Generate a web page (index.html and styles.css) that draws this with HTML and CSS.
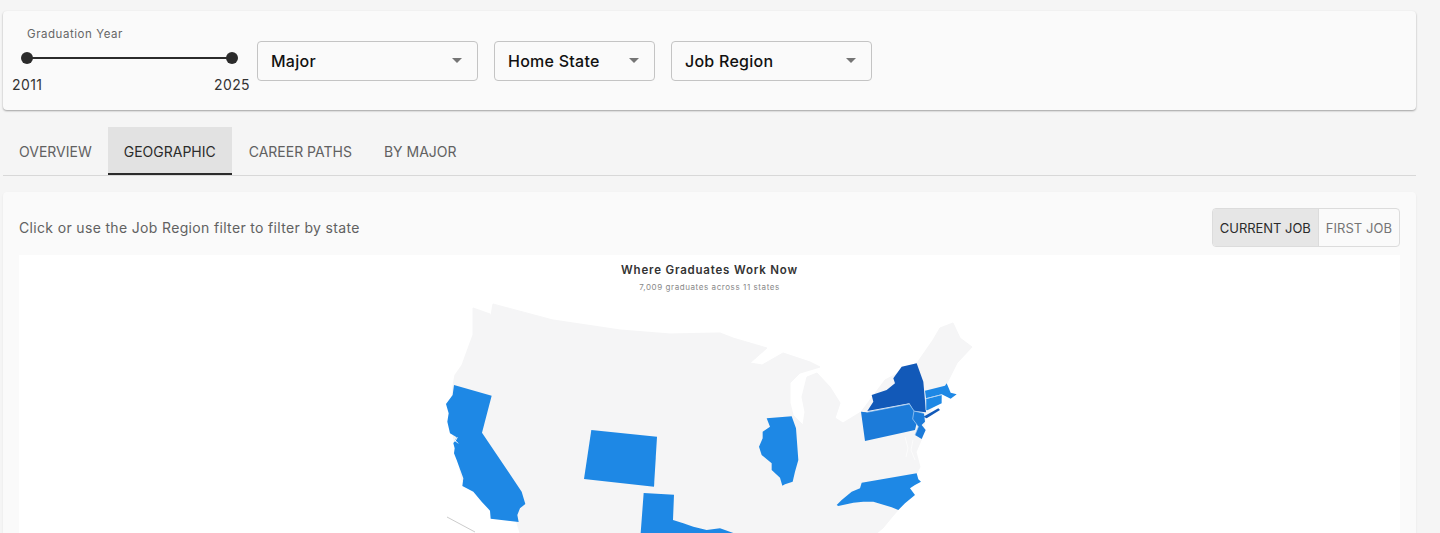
FILE: index.html
```html
<!DOCTYPE html>
<html lang="en">

<head>
    <meta charset="UTF-8">
    <meta name="viewport" content="width=device-width, initial-scale=1.0">
    <title>Graduate outcomes</title>
    <link rel="stylesheet" href="styles.css">
</head>

<body>
    <div class="page">
        <div class="filters">
            <div class="year-filter">
                <div class="year-label">Graduation Year</div>
                <div class="slider">
                    <span class="thumb"></span>
                    <span class="thumb"></span>
                </div>
                <div class="year-marks">
                    <span>2011</span>
                    <span>2025</span>
                </div>
            </div>
            <div class="select select-major"><span>Major</span><i class="arrow"></i></div>
            <div class="select select-home"><span>Home State</span><i class="arrow"></i></div>
            <div class="select select-region"><span>Job Region</span><i class="arrow"></i></div>
        </div>

        <div class="tabs">
            <div class="tab">Overview</div>
            <div class="tab active">Geographic</div>
            <div class="tab">Career Paths</div>
            <div class="tab">By Major</div>
        </div>

        <div class="card">
            <div class="card-head">
                <p class="hint">Click or use the Job Region filter to filter by state</p>
                <div class="toggle">
                    <div class="toggle-btn on">Current Job</div>
                    <div class="toggle-btn">First Job</div>
                </div>
            </div>
            <div class="chart">
                <h3 class="chart-title">Where Graduates Work Now</h3>
                <p class="chart-sub">7,009 graduates across 11 states</p>
                <svg class="map" viewBox="19 295 1381 238" width="1381" height="238">
                    <!-- land, page coords -->
                    <path class="land" d="M473 308 L490 314 L492 325 L489 327 L493 304 L553 320 L620 330 L670 334 L720 333 L733 338 L767 348 L750 363 L762 365 L783 353 L810 362 L820 367 L800 373 L790 383 L790 403 L793 415 L803 425 L805 412 L802 397 L807 377 L817 373 L830 387 L840 403 L835 418 L843 423 L861 412 L885 380 L917 363 L933 340 L940 328 L953 323 L960 338 L972 347 L957 363 L947 383 L925 420 L922 438 L916 452 L920 467 L898 510 L892 517 L883 528 L877 533 L520 533 L516 520 L480 495 L462 480 L450 420 L453 386 L455 375 L462 365 L470 343 L473 335 Z" />
                    <path class="bay" d="M905 437 L908 448 L906 457 M913 440 L911 450 L915 460" />
                    <path class="inset" d="M447 517 L475 532" />
                    <g transform="translate(440 380) scale(.33333)">
                        <path class="st" d="M42 15 L155 47 L126 158 L245 335 L256 372 L240 385 L232 405 L236 426 L152 416 L150 392 L125 365 L100 335 L67 318 L70 295 L50 240 L42 220 L44 205 L40 190 L50 172 L30 160 L22 125 L26 100 L18 72 L38 45 Z" />
                        <path class="inlet" d="M52 172 L44 186 M42 178 L54 190" />
                    </g>
                    <g transform="translate(420 295) scale(.33333)">
                        <path class="st" d="M514 405 L711 425 L702 575 L492 552 Z" />
                        <path class="st" d="M671 594 L762 599 L759 675 L790 685 L820 695 L860 705 L900 700 L900 714 L662 714 Z" />
                    </g>
                    <g transform="translate(820 420) scale(.33333)">
                        <path class="st" d="M50 255 L65 240 L95 215 L120 205 L125 188 L290 160 L295 178 L303 185 L285 195 L270 205 L285 225 L255 250 L235 270 L215 262 L160 245 L130 245 L100 248 L55 258 Z" />
                    </g>
                    <g transform="translate(720 295) scale(.33333)">
                        <path class="st" d="M0 700 L40 714 L0 714 Z" />
                        <path class="st" d="M140 370 L215 364 L228 400 L235 495 L225 530 L218 560 L195 568 L187 572 L180 548 L155 525 L155 505 L125 480 L117 455 L128 430 L128 410 L150 395 Z" />
                        <path class="st-dark" d="M442 348 L460 320 L455 300 L500 285 L525 265 L520 250 L545 215 L590 205 L610 260 L618 352 L582 348 L568 325 Z" />
                        <path class="st-dark" d="M610 365 L655 340 L660 345 L620 370 Z" />
                        <path class="st-mid" d="M423 350 L440 352 L568 327 L582 345 L590 385 L585 405 L435 438 Z" />
                        <path class="st-mid" d="M582 348 L612 355 L615 380 L605 390 L617 405 L605 432 L585 420 L595 395 L578 372 Z" />
                        <path class="st" d="M618 312 L665 300 L665 325 L622 346 L618 345 Z" />
                        <path class="st" d="M615 287 L675 272 L680 265 L692 293 L710 298 L692 311 L665 298 L618 310 Z" />
                        <!-- state borders -->
                        <path class="border" d="M440 352 L568 327 L582 348 L578 372 L595 395 L585 420 M582 348 L612 355 M618 311 L665 299 M618 345 L618 311" />
                    </g>
                </svg>
            </div>
        </div>
    </div>
</body>

</html>
```

FILE: styles.css
```css
* {
    margin: 0;
    padding: 0;
    box-sizing: border-box;
}

body {
    height: 100vh;
    overflow: hidden;
    background: #f5f5f5;
    font-family: Inter, "Liberation Sans", sans-serif;
}

.page {
    width: 1416px;
    padding: 11px 0 0 3px;
}

.filters {
    height: 99px;
    display: flex;
    align-items: center;
    gap: 16px;
    padding: 0 9px;
    background: #fafafa;
    border-radius: 4px;
    box-shadow: 0 1px 2px rgba(0, 0, 0, .35);
}

.year-filter {
    width: 238px;
    margin-right: -9px;
    padding-bottom: 3px;
}

.year-label {
    font-size: 11.5px;
    line-height: 16px;
    letter-spacing: .55px;
    color: #666;
    padding-left: 15px;
}

.slider {
    position: relative;
    display: flex;
    justify-content: space-between;
    align-items: center;
    width: 217px;
    height: 12px;
    margin: 10px 0 0 9px;
}

.slider::before {
    content: "";
    position: absolute;
    left: 4px;
    right: 4px;
    top: 5px;
    height: 2px;
    background: #2b2b2b;
}

.thumb {
    position: relative;
    width: 12px;
    height: 12px;
    border-radius: 50%;
    background: #2b2b2b;
}

.year-marks {
    display: flex;
    justify-content: space-between;
    margin-top: 14px;
    font-size: 14px;
    line-height: 14px;
    letter-spacing: .4px;
    color: #333;
}

.select {
    height: 40px;
    display: flex;
    align-items: center;
    justify-content: space-between;
    padding: 0 15px 0 13px;
    border: 1px solid #c4c4c4;
    border-radius: 4px;
    font-size: 16px;
    font-weight: 500;
    letter-spacing: .25px;
    color: #111;
}

.select-major {
    width: 221px;
}

.select-home {
    width: 161px;
}

.select-region {
    width: 201px;
}

.arrow {
    width: 0;
    height: 0;
    border-left: 5.5px solid transparent;
    border-right: 5.5px solid transparent;
    border-top: 5.5px solid #757575;
    margin-top: -1px;
}

.tabs {
    display: flex;
    height: 49px;
    margin-top: 17px;
    border-bottom: 1px solid #d8d8d8;
}

.tab {
    height: 48px;
    padding: 0 16px;
    display: flex;
    align-items: center;
    font-size: 14px;
    font-weight: 400;
    text-transform: uppercase;
    color: #616161;
}

.tab.active {
    background: #e2e2e2;
    color: #2b2b2b;
    border-bottom: 2px solid #2b2b2b;
    padding-top: 2px;
    margin-right: 1px;
    width: 124px;
}

.card {
    margin-top: 16px;
    padding: 16px;
    height: 500px;
    background: #fafafa;
    border-radius: 4px;
    box-shadow: 0 1px 2px rgba(0, 0, 0, .08);
}

.card-head {
    display: flex;
    justify-content: space-between;
    align-items: center;
    height: 39px;
    margin-bottom: 8px;
}

.hint {
    font-size: 14px;
    letter-spacing: .34px;
    color: #616161;
}

.toggle {
    display: flex;
    height: 39px;
    border: 1px solid #dcdcdc;
    border-radius: 4px;
    overflow: hidden;
    font-size: 13px;
    letter-spacing: .05px;
    text-transform: uppercase;
    color: #757575;
}

.toggle-btn {
    display: flex;
    align-items: center;
    padding: 0 7px;
}

.toggle-btn.on {
    background: #e6e6e6;
    color: #2b2b2b;
    border-right: 1px solid #dcdcdc;
    padding: 0 7px;
    letter-spacing: -.05px;
}

.chart {
    background: #fff;
    height: 400px;
    padding-top: 8px;
    text-align: center;
}

.chart-title {
    font-size: 11.5px;
    line-height: 14px;
    font-weight: 600;
    letter-spacing: .8px;
    color: #333;
}

.chart-sub {
    margin-top: 4px;
    font-size: 8px;
    line-height: 12px;
    letter-spacing: .58px;
    color: #888;
}

.map {
    display: block;
    margin-top: 2px;
}

.land {
    fill: #f5f5f6;
    stroke: #f5f5f6;
    stroke-width: 1;
    stroke-linejoin: round;
}

.bay {
    fill: none;
    stroke: #fcfcfc;
    stroke-width: 1;
}

.inset {
    fill: none;
    stroke: #ccc;
    stroke-width: 1;
}

.st {
    fill: #1e88e5;
}

.st-mid {
    fill: #1c7bd9;
}

.st-dark {
    fill: #1259b8;
}

.inlet {
    fill: none;
    stroke: #fff;
    stroke-width: 3;
}

.border {
    fill: none;
    stroke: #a9cdf2;
    stroke-width: 2.2;
}
```
